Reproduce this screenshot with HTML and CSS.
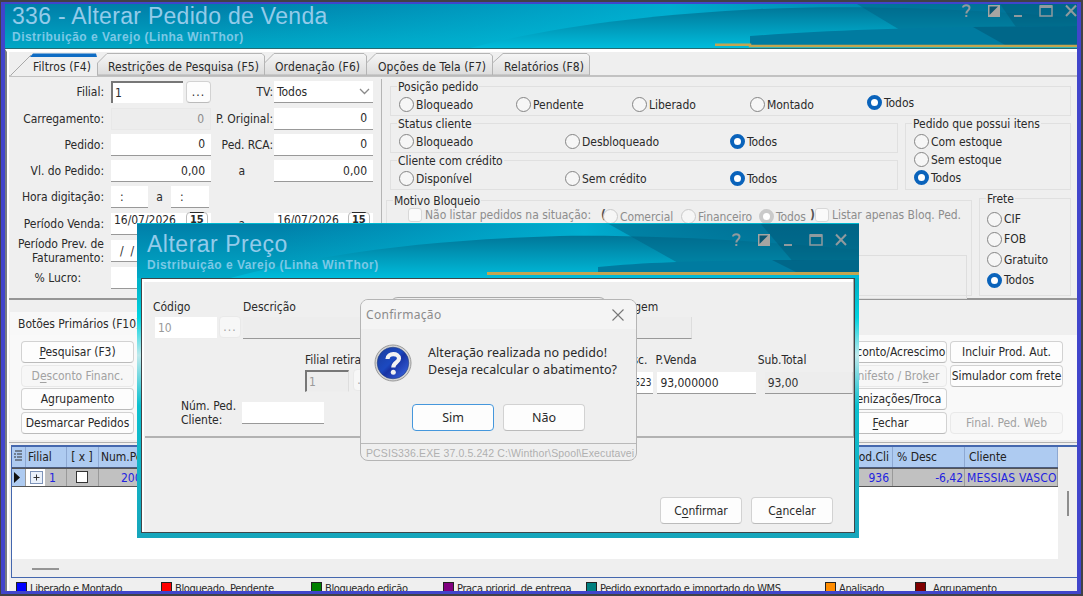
FILE: index.html
```html
<!DOCTYPE html>
<html lang="pt-BR">

<head>
    <title>336 - Alterar Pedido de Venda</title>
    <meta charset="UTF-8">
    <meta name="viewport" content="width=device-width, initial-scale=1">
    <link rel="stylesheet" href="styles.css">
</head>

<body>
    <svg width="0" height="0" class="defs">
        <defs>
            <linearGradient id="sea" x1="0" y1="0" x2="0" y2="1">
                <stop offset="0" stop-color="#007ea8"/>
                <stop offset="1" stop-color="#00a8c6"/>
            </linearGradient>
            <linearGradient id="glow" x1="0" y1="0" x2="1" y2="0">
                <stop offset="0.2" stop-color="#00c8e6" stop-opacity="0"/>
                <stop offset="0.62" stop-color="#00c8e6" stop-opacity=".6"/>
                <stop offset="0.85" stop-color="#00b0d0" stop-opacity="0.1"/>
            </linearGradient>
            <linearGradient id="wave" x1="0" y1="0" x2="0" y2="1">
                <stop offset="0" stop-color="#007799"/>
                <stop offset="1" stop-color="#00bcdb"/>
            </linearGradient>
            <linearGradient id="tabfill" x1="0" y1="0" x2="0" y2="1">
                <stop offset="0" stop-color="#f6f6f6"/>
                <stop offset="1" stop-color="#dcdcdc"/>
            </linearGradient>
            <symbol id="winbuttons" viewBox="0 0 116 16">
                <g fill="none" stroke="#909a9e" stroke-width="2">
                    <path d="M2 4.500C2 1.500 8.500 1.500 8.500 4.800C8.500 7.500 5.300 7.500 5.300 10.500M5.300 12V14"/>
                    <path d="M53 13H61"/>
                    <path d="M79 3H91V13H79Z" stroke-width="1.500"/>
                    <path d="M79 3.500H91" stroke-width="3"/>
                    <path d="M105 2.500L115 13M115 2.500L105 13"/>
                </g>
                <path d="M27 2H39V14H27Z" fill="#a5a5a2"/>
                <path d="M28.500 3.500H37L28.500 12Z" fill="#0b5571"/>
            </symbol>
        </defs>
    </svg>

    <div class="window">
        <header class="title-bar">
            <svg class="title-art" width="1072" height="45" viewBox="5 4 1072 45">
                <path d="M5 4H1077V49H5Z" fill="url(#sea)"/>
                <path d="M5 4H1077V49H5Z" fill="url(#glow)"/>
                <path d="M470 48C560 25 650 15 760 9C850 5 960 8 1077 18V48Z" fill="url(#wave)"/>
                <path d="M857 4H1077V30H900Z" fill="#006284" opacity=".5"/>
                <path d="M1000 4H1077V30H1018Z" fill="#004a68" opacity=".3"/>
                <path d="M750 36C830 30 920 27 1077 26V45H750Z" fill="#007ba0"/>
                <path d="M973 27L1077 26V45H1005Z" fill="#005a7a" opacity=".6"/>
                <path d="M715 44.800H750V46H1077" fill="none" stroke="#c3a550" stroke-width="2.500"/>
                <path d="M5 48.500H1077" stroke="#276a72"/>
            </svg>
            <div class="title-text">
                <h1>336 - Alterar Pedido de Venda</h1>
                <p>Distribuição e Varejo (Linha WinThor)</p>
            </div>
            <svg class="win-icons" width="116" height="16"><use href="#winbuttons"/></svg>
        </header>

        <main class="page">
            <nav class="tabs">
                <svg class="tab-shapes" width="600" height="24" viewBox="9 52 600 24">
                    <g fill="url(#tabfill)" stroke="#b4b4b4">
                        <path d="M97.500 75V63L107 53.500H262L264.500 56V75Z"/>
                        <path d="M264.500 75V63L274 53.500H364L366.500 56V75Z"/>
                        <path d="M366.500 75V63L376 53.500H490L492.500 56V75Z"/>
                        <path d="M492.500 75V63L503 53.500H587L589.500 56V75Z"/>
                    </g>
                    <path d="M11 76L31 55H97V76Z" fill="#efefef"/>
                    <path d="M11 75L31 55" stroke="#a8a8a8"/>
                    <path d="M30 57L33 53.500H96L97 57Z" fill="#0f6cc4"/>
                </svg>
                <div class="tab-labels">
                    <span class="tab active">Filtros (F4)</span>
                    <span class="tab wide">Restrições de Pesquisa (F5)</span>
                    <span class="tab">Ordenação (F6)</span>
                    <span class="tab options">Opções de Tela (F7)</span>
                    <span class="tab">Relatórios (F8)</span>
                </div>
            </nav>

            <div class="filters">
                <section class="fields">
                    <label>Filial:</label>
                    <div class="pair"><span class="input sunken">1</span><button class="dots">...</button></div>
                    <label>TV:</label>
                    <span class="input select">Todos <svg width="11" height="7"><path d="M1 1L5.500 5.500L10 1" fill="none" stroke="#8a8a8a" stroke-width="1.300"/></svg></span>

                    <label>Carregamento:</label>
                    <span class="input num off">0</span>
                    <label>P. Original:</label>
                    <span class="input num">0</span>

                    <label>Pedido:</label>
                    <span class="input num">0</span>
                    <label>Ped. RCA:</label>
                    <span class="input num">0</span>

                    <label>Vl. do Pedido:</label>
                    <span class="input num">0,00</span>
                    <label class="mid">a</label>
                    <span class="input num">0,00</span>

                    <label>Hora digitação:</label>
                    <div class="hours"><span class="input">:</span><span>a</span><span class="input">:</span></div>
                    <span></span>
                    <span></span>

                    <label>Período Venda:</label>
                    <span class="input date">16/07/2026 <b class="cal">15</b></span>
                    <label class="mid">a</label>
                    <span class="input date">16/07/2026 <b class="cal">15</b></span>

                    <label class="two-lines">Período Prev. de<br>Faturamento:</label>
                    <span class="input slashes">/ &nbsp;/</span>
                    <span></span>
                    <span></span>

                    <label class="profit">% Lucro:</label>
                    <span class="input"></span>
                </section>

                <section class="groups">
                    <div class="group position">
                        <span class="legend">Posição pedido</span>
                        <div class="radios five">
                            <span class="radio">Bloqueado</span>
                            <span class="radio">Pendente</span>
                            <span class="radio">Liberado</span>
                            <span class="radio">Montado</span>
                            <span class="radio on raised">Todos</span>
                        </div>
                    </div>
                    <div class="group status">
                        <span class="legend">Status cliente</span>
                        <div class="radios three">
                            <span class="radio">Bloqueado</span>
                            <span class="radio">Desbloqueado</span>
                            <span class="radio on">Todos</span>
                        </div>
                    </div>
                    <div class="group credit">
                        <span class="legend">Cliente com crédito</span>
                        <div class="radios three">
                            <span class="radio">Disponível</span>
                            <span class="radio">Sem crédito</span>
                            <span class="radio on">Todos</span>
                        </div>
                    </div>
                    <div class="group stock">
                        <span class="legend">Pedido que possui itens</span>
                        <div class="stack">
                            <span class="radio">Com estoque</span>
                            <span class="radio">Sem estoque</span>
                            <span class="radio on">Todos</span>
                        </div>
                    </div>
                    <div class="group reason">
                        <span class="legend">Motivo Bloqueio</span>
                        <div class="reason-row">
                            <span class="check not-list">Não listar pedidos na situação:</span>
                            <b>(</b>
                            <span class="radio dim">Comercial</span>
                            <span class="radio dim">Financeiro</span>
                            <span class="radio dim on">Todos</span>
                            <b class="close">)</b>
                            <span class="check only">Listar apenas Bloq. Ped.</span>
                        </div>
                        <div class="inner-box"></div>
                    </div>
                    <div class="group freight">
                        <span class="legend">Frete</span>
                        <div class="stack">
                            <span class="radio">CIF</span>
                            <span class="radio">FOB</span>
                            <span class="radio">Gratuito</span>
                            <span class="radio on">Todos</span>
                        </div>
                    </div>
                </section>
            </div>

            <div class="actions">
                <div class="actions-tab">Botões Primários (F10)</div>
                <div class="actions-body">
                    <div class="button-col">
                        <button><u>P</u>esquisar (F3)</button>
                        <button class="off">D<u>e</u>sconto Financ.</button>
                        <button>Agrupamento</button>
                        <button>Desmarcar Pedidos</button>
                    </div>
                    <div class="button-col push">
                        <button>Desconto/Acrescimo</button>
                        <button class="off">Manifesto / Bro<u>k</u>er</button>
                        <button>Indenizações/Troca</button>
                        <button><u>F</u>echar</button>
                    </div>
                    <div class="button-col last">
                        <button>Incluir Prod. Aut.</button>
                        <button>Simulador com frete</button>
                        <button class="off final">Final. Ped. Web</button>
                    </div>
                </div>
            </div>

            <div class="grid-box">
                <div class="grid-main">
                    <div class="grid-row head">
                        <span class="mark"><svg width="9" height="11"><path d="M1 1H8M3 4H8M3 7H8M1 10H8M0 4H2M0 7H2" stroke="#333"/></svg></span>
                        <span>Filial</span>
                        <span class="center">[ x ]</span>
                        <span>Num.Ped</span>
                        <span class="right">Cod.Cli</span>
                        <span>% Desc</span>
                        <span>Cliente</span>
                    </div>
                    <div class="grid-row line">
                        <span class="mark arrow"><svg width="7" height="11"><path d="M0 0L6 5.500L0 11Z" fill="#111"/></svg></span>
                        <span class="first"><i class="plus"><svg width="11" height="11"><path d="M2.500 5.500H8.500M5.500 2.500V8.500" stroke="#333"/></svg></i>1</span>
                        <span class="center"><i class="tick"></i></span>
                        <span class="order">2001</span>
                        <span class="right">936</span>
                        <span class="right desc-value">-6,42</span>
                        <span class="client">MESSIAS VASCO</span>
                    </div>
                </div>
                <div class="v-scroll"><i></i></div>
                <div class="h-scroll"><i></i></div>
            </div>

            <footer class="legend-bar">
                <span><i class="blue"></i>Liberado e Montado</span>
                <span><i class="red"></i>Bloqueado, Pendente</span>
                <span><i class="green"></i>Bloqueado edição</span>
                <span><i class="purple"></i>Praça priorid. de entrega</span>
                <span><i class="teal"></i>Pedido exportado e importado do WMS</span>
                <span><i class="orange"></i>Analisado</span>
                <span class="grouped"><i class="maroon"></i>Agrupamento</span>
            </footer>
        </main>
    </div>

    <div class="price-window">
        <header class="title-bar">
            <svg class="title-art" width="722" height="55" viewBox="137 223 722 55">
                <path d="M137 223H859V278H137Z" fill="url(#sea)"/>
                <path d="M137 223H859V278H137Z" fill="url(#glow)"/>
                <path d="M230 278C330 252 430 240 560 236C650 235 750 240 859 250V278Z" fill="url(#wave)"/>
                <path d="M607 223H859V264H680Z" fill="#006284" opacity=".5"/>
                <path d="M760 223H859V264H795Z" fill="#004a68" opacity=".35"/>
                <path d="M598 267C660 261 740 260 859 260V272H598Z" fill="#007ba0"/>
                <path d="M772 260H859V272H796Z" fill="#005a7a" opacity=".6"/>
                <path d="M487 273.500H859" stroke="#c3a550" stroke-width="3"/>
                <path d="M137 223.500H859" stroke="#00b8cf"/>
            </svg>
            <div class="title-text">
                <h1>Alterar Preço</h1>
                <p>Distribuição e Varejo (Linha WinThor)</p>
            </div>
            <svg class="win-icons" width="116" height="16"><use href="#winbuttons"/></svg>
        </header>
        <div class="price-body">
            <div class="price-form">
                <div class="row-a">
                    <div class="cell code"><label>Código</label><span class="input dim">10</span></div>
                    <button class="dots off">...</button>
                    <div class="cell desc"><label>Descrição</label><span class="input off"></span></div>
                    <div class="cell pack"><label>Embalagem</label><span class="input off"></span></div>
                </div>
                <div class="row-b">
                    <div class="cell branch"><label>Filial retira</label><span class="input sunken off">1</span></div>
                    <button class="dots off">...</button>
                    <div class="cell disc"><label>% Desc.</label><span class="input num">623</span></div>
                    <div class="cell sale"><label>P.Venda</label><span class="input">93,000000</span></div>
                    <div class="cell total"><label>Sub.Total</label><span class="input off">93,00</span></div>
                </div>
                <div class="row-c">
                    <label>Núm. Ped.<br>Cliente:</label>
                    <span class="input"></span>
                </div>
            </div>
            <div class="price-buttons">
                <button>C<u>o</u>nfirmar</button>
                <button>C<u>a</u>ncelar</button>
            </div>
        </div>
    </div>

    <div class="behind"></div>
    <div class="confirm">
        <div class="confirm-title">
            <span>Confirmação</span>
            <svg width="12" height="12"><path d="M.5 .5L11.500 11.500M11.500 .5L.5 11.500" stroke="#777" stroke-width="1.100"/></svg>
        </div>
        <div class="confirm-msg">
            <svg width="38" height="38" viewBox="0 0 38 38">
                <defs>
                    <linearGradient id="ball" x1="0" y1="0" x2="1" y2="1">
                        <stop offset="0" stop-color="#1a3c9c"/>
                        <stop offset=".45" stop-color="#1c49c0"/>
                        <stop offset=".55" stop-color="#1733a4"/>
                        <stop offset="1" stop-color="#3f6ce8"/>
                    </linearGradient>
                </defs>
                <circle cx="19" cy="19" r="18" fill="#d4d4d4" stroke="#999"/>
                <circle cx="19" cy="19" r="15.800" fill="url(#ball)" stroke="#27417e" stroke-width=".6"/>
                <path d="M13.500 15C13.500 8.500 25 8.500 25 14.500C25 18.500 19.300 18.500 19.300 23.500" fill="none" stroke="#f2f2f2" stroke-width="4.200"/>
                <circle cx="19.300" cy="28.200" r="2.500" fill="#f2f2f2"/>
            </svg>
            <p>Alteração realizada no pedido!<br>Deseja recalcular o abatimento?</p>
        </div>
        <div class="confirm-buttons">
            <button class="primary">Sim</button>
            <button>Não</button>
        </div>
        <div class="confirm-status">PCSIS336.EXE 37.0.5.242 C:\Winthor\Spool\Executavei</div>
    </div>
</body>

</html>
```
FILE: styles.css
```css
*,
*::before {
    box-sizing: border-box;
}

body {
    margin: 0;
    width: 1083px;
    height: 596px;
    overflow: hidden;
    background-color: #414146;
    color: #2a2a2a;
    font: 12px/14px "DejaVu Sans Condensed", "DejaVu Sans", sans-serif;
    letter-spacing: -.03px;
    white-space: nowrap;
}

.defs {
    position: absolute;
}

h1,
p {
    margin: 0;
}

button {
    height: 22px;
    padding: 0;
    border: 1px solid #d2d2d2;
    border-bottom-color: #bbb;
    border-radius: 4px;
    background-color: #fdfdfd;
    color: inherit;
    font: inherit;
    letter-spacing: inherit;
    white-space: nowrap;
}

button.off {
    border-color: #e9e9e9;
    background-color: #f7f7f7;
    color: #a2a2a2;
}

u {
    text-underline-offset: 2px;
}

/* main window */
.window {
    display: flex;
    flex-direction: column;
    width: 1080px;
    height: 592px;
    margin: 2px 2px 2px 1px;
    border: solid #4145cb;
    border-width: 2px 4px 3px 4px;
    overflow: hidden;
}

.title-bar {
    display: grid;
    flex: none;
    height: 45px;
    color: #93cbea;
    font-family: "Liberation Sans", sans-serif;
}

.title-bar > * {
    grid-area: 1 / 1;
}

.title-text {
    padding: 0 0 0 7px;
}

.title-bar h1 {
    font-size: 23px;
    font-weight: normal;
    line-height: 24px;
    letter-spacing: .3px;
}

.title-bar p {
    margin-top: 2px;
    font-size: 12px;
    font-weight: bold;
    line-height: 14px;
    letter-spacing: .48px;
    color: #7cc8e6;
}

.win-icons {
    justify-self: end;
    margin-top: -1px;
}

.page {
    display: flex;
    flex: 1;
    flex-direction: column;
    min-height: 0;
    border-left: 2px solid #777d80;
    border-top: 3px solid #fff;
    background-color: #efefef;
    box-shadow: inset 2px 0 #fff;
    padding-left: 2px;
}

.tabs {
    display: grid;
    flex: none;
    height: 25px;
    border-bottom: 2px solid #c2c2c2;
}

.tab-shapes,
.tab-labels {
    grid-area: 1 / 1;
}

.tab-labels {
    display: grid;
    grid-template-columns: 75px 167px 103px 126px 100px;
    padding: 8px 0 0 24px;
    letter-spacing: .1px;
}

/* filter fields on the left */
.filters {
    display: flex;
    flex: none;
    height: 223px;
    border-bottom: 2px solid #969696;
}

.fields {
    display: grid;
    grid-template-columns: 96px 100px 62px 100px;
    grid-template-rows: 26.500px 26px 26.500px 26px 26px 27px 28px 26px;
    align-items: center;
    width: 373px;
    margin: 2px 0 4px;
    border-right: 1px solid #b5b5b5;
    flex: none;
}

.fields > label {
    justify-self: end;
    padding-right: 1px;
}

.fields > :nth-child(4n + 2) {
    margin-left: 6px;
    width: 100px;
}

.fields > :nth-child(4n + 3) {
    margin-right: -7px;
}

.fields > :nth-child(4n) {
    margin-left: 7px;
    width: 99px;
}

.fields > .mid {
    padding-right: 29px;
}

.fields > .two-lines {
    text-align: right;
    padding-right: 1px;
}

.fields > .profit {
    padding-right: 24px;
}

.input {
    display: flex;
    align-items: center;
    height: 22px;
    padding: 0 3px;
    border-bottom: 1px solid #999;
    background-color: #fff;
}

.input.num {
    justify-content: flex-end;
    padding-right: 6px;
}

.input.off {
    background-color: #ededed;
}

.input.off.num {
    border: 1px solid #e8e8e8;
    color: #8c8c8c;
}

.input.sunken {
    border: solid #777;
    border-width: 2px 0 0 2px;
    padding-left: 2px;
}

.input.select {
    justify-content: space-between;
}

.pair {
    display: flex;
    gap: 3px;
}

.pair .input {
    width: 72px;
}

.dots {
    width: 25px;
    letter-spacing: 1px;
}

.hours {
    display: grid;
    grid-template-columns: 37px 23px 38px;
    align-items: center;
    text-align: center;
}

.hours .input {
    padding-left: 9px;
}

.input.date {
    justify-content: space-between;
    padding-bottom: 6px;
}

.cal {
    width: 22px;
    padding: 0 3px;
    border: 1px solid #bbb;
    border-radius: 4px;
    font-size: 11px;
    text-decoration: overline;
}

.slashes {
    padding-left: 9px;
}

/* group boxes */
.groups {
    display: grid;
    flex: none;
    width: 688px;
    grid-template-columns: 508px 7px 67px 7px 92px;
    grid-template-rows: 30px 7px 30px 7px 30px 8px 98px;
    padding: 9px 0 0 8px;
}

.group {
    border: 1px solid #e0e0e0;
}

.position {
    grid-area: 1 / 1 / 2 / 6;
}

.status {
    grid-area: 3 / 1;
}

.credit {
    grid-area: 5 / 1;
}

.stock {
    grid-area: 3 / 3 / 6 / 6;
}

.reason {
    grid-area: 7 / 1 / 8 / 4;
    margin: 2px 0 0 -4px;
}

.freight {
    grid-area: 7 / 5;
}

.legend {
    display: block;
    width: fit-content;
    height: 14px;
    margin: -7px 0 0 6px;
    padding: 0 1px;
    background-color: #efefef;
}

.radios {
    display: grid;
    margin: 2px 0 0 8px;
}

.five {
    grid-template-columns: 117px 116px 118px 117px 100px;
}

.three {
    grid-template-columns: 166px 165px 100px;
}

.radio {
    display: flex;
    align-items: center;
    gap: 2px;
    height: 17px;
}

.radio::before {
    content: "";
    width: 15px;
    height: 15px;
    flex: none;
    border: 1px solid #858585;
    border-radius: 50%;
    background-color: #f6f6f6;
}

.radio.on::before {
    border: 4.500px solid #0a63bb;
    background-color: #fff;
}

.radio.raised {
    margin-top: -2px;
    margin-bottom: 2px;
}

.radio.dim {
    color: #8d8d8d;
}

.radio.dim::before {
    border-color: #cacaca;
}

.stack {
    display: grid;
    grid-auto-rows: 18px;
    margin: 2px 0 0 8px;
}

.freight .stack {
    grid-auto-rows: 20.300px;
    margin-top: 3px;
    margin-left: 7px;
    align-items: center;
}

.reason-row {
    display: flex;
    align-items: center;
    height: 18px;
    margin-left: 21px;
    margin-top: -2px;
    color: #8d8d8d;
}

.reason-row b {
    width: 5px;
    margin-right: -3px;
    color: #555;
}

.reason-row .close {
    width: 4px;
    margin-right: 1px;
}

.check {
    display: flex;
    flex: none;
    align-items: center;
    gap: 3px;
}

.check::before {
    content: "";
    width: 14px;
    height: 14px;
    border: 1px solid #d8d8d8;
    border-radius: 3px;
    background-color: #fafafa;
}

.not-list {
    width: 193px;
}

.reason-row .radio {
    flex: none;
    width: 78px;
    padding-top: 3px;
    letter-spacing: -.1px;
}

.reason-row .radio.on {
    width: 51px;
}

.inner-box {
    height: 44px;
    margin: 31px 4px 0 7px;
    border: 1px solid #dedede;
}

/* action buttons */
.actions {
    flex: none;
    height: 143px;
    border-bottom: 1px solid #b0b0b0;
}

.actions-tab {
    width: 200px;
    height: 23px;
    margin: 12px 0 0 1px;
    padding: 5px 0 0 8px;
    background-color: #f8f8f8;
}

.actions-body {
    display: flex;
    height: 105px;
    margin-left: 1px;
    padding: 6px 14px 0 11px;
    background-color: #f9f9f9;
}

.button-col {
    display: grid;
    grid-template-rows: repeat(4, 23.700px);
    width: 113px;
}

.push {
    margin-left: auto;
    margin-right: 3px;
}

.final {
    grid-row: 4;
}

/* order grid */
.grid-box {
    display: grid;
    flex: none;
    grid-template-columns: 1fr 19px;
    grid-template-rows: 112px 18px;
    height: 133px;
    margin: 2px 0 0 2px;
    border: solid #4467ae;
    border-width: 2px 0 1px 1px;
}

.grid-main {
    background-color: #fff;
}

.grid-row {
    display: grid;
    grid-template-columns: 14px 41px 32px 600px 1fr 72px 93px;
    height: 19px;
    color: #2323e0;
    line-height: 18px;
}

.grid-row > span {
    padding: 0 3px 0 2px;
    border-right: 1px solid #9a9a9a;
    overflow: hidden;
}

.grid-row.head {
    height: 21px;
    border-bottom: 1px solid #4b5c80;
    background-color: #aecbf1;
    color: #222;
    line-height: 21px;
}

.grid-row.head > span {
    border-color: #8da8d2;
}

.grid-row.head > :nth-child(n + 6) {
    padding-left: 4px;
}

.line {
    border: solid #555;
    border-width: 1px 0;
    background-color: #c1c1c1;
}

.grid-row .right {
    text-align: right;
}

.grid-row .desc-value {
    padding-right: 1px;
}

.grid-row .center {
    text-align: center;
}

.grid-row .client {
    padding-right: 0;
    letter-spacing: .15px;
}

.grid-row .order {
    padding-left: 22px;
}

.arrow {
    background-color: #aecbf1;
}

.arrow svg {
    margin-top: 3px;
}

.grid-row .first {
    display: flex;
    align-items: center;
    gap: 6px;
    background: linear-gradient(90deg, #fff 19px, transparent 19px);
    padding-left: 4px;
}

.plus {
    display: flex;
    width: 13px;
    height: 13px;
    border: 1px solid #7d93b8;
    background-color: #eaf1fb;
}

.tick {
    display: inline-block;
    width: 12px;
    height: 12px;
    margin-top: 2px;
    border: 1.500px solid #333;
    background-color: #fff;
}

.v-scroll i {
    display: block;
    width: 2px;
    height: 25px;
    margin: 44px 0 0 9px;
    background-color: #8d8d8d;
}

.h-scroll i {
    display: block;
    width: 27px;
    height: 2px;
    margin: 9px 0 0 20px;
    background-color: #959595;
}

.legend-bar {
    display: grid;
    flex: none;
    grid-template-columns: 145px 150px 132px 143px 239px 90px 150px;
    padding: 4px 0 0 7px;
    font-size: 11px;
    letter-spacing: -.36px;
}

.legend-bar span {
    display: flex;
    gap: 3px;
}

.legend-bar .grouped {
    gap: 7px;
}

.legend-bar i {
    width: 11px;
    height: 11px;
    border: 1px solid #222;
}

.blue {
    background-color: #00f;
}

.red {
    background-color: #f00;
}

.green {
    background-color: #008000;
}

.purple {
    background-color: #800080;
}

.teal {
    background-color: #008080;
}

.orange {
    background-color: #ff8c00;
}

.maroon {
    background-color: #800000;
}

/* price window, floats over the main one */
.price-window {
    position: absolute;
    left: 137px;
    top: 223px;
    width: 722px;
    height: 315px;
    background: linear-gradient(#00b4c9 20%, #00d3df 30%, #bfe9ec 42%, #0cc0cf 58%, #16a5bb);
}

.price-window .title-bar {
    height: 55px;
}

.price-window .title-text {
    padding: 9px 0 0 10px;
}

.price-window h1 {
    letter-spacing: .5px;
}

.price-window .win-icons {
    margin: 9px 12px 0 0;
}

.price-body {
    width: 714px;
    height: 255px;
    margin-left: 4px;
    border: 1px solid #404649;
    background-color: #efefef;
    box-shadow: inset 2px 3px #fff;
}

.price-form {
    height: 159px;
    margin-left: 3px;
    border-bottom: 2px solid #b2b2b2;
    border-right: 1px solid #aaa;
    padding: 21px 0 0 8px;
}

.cell label {
    display: block;
    height: 17px;
}

.row-a,
.row-b {
    display: flex;
    align-items: flex-end;
    height: 39px;
}

.price-form .input.off {
    border-bottom: 1px solid #999;
    border-right: 1px solid #ddd;
    color: #9a9a9a;
}

.price-form .input.dim {
    border-color: #eee;
    color: #9a9a9a;
}

.code {
    width: 64px;
}

.code .input {
    margin-left: 2px;
}

.row-a .dots {
    margin: 0 2px 1px;
    width: 22px;
}

.desc {
    width: 290px;
}

.pack {
    width: 119px;
    margin-left: 40px;
}

.pack label {
    padding-left: 21px;
}

.row-b {
    height: 55px;
    padding-left: 152px;
}

.branch .input.off {
    width: 44px;
    border-top: 2px solid #777;
    border-bottom-color: #eee;
}

.branch {
    width: 46px;
    padding-bottom: 2px;
}

.row-b .dots {
    width: 22px;
    margin: 0 0 3px 2px;
}

.disc {
    width: 60px;
    margin-left: 219px;
}

.disc label,
.sale label,
.total label {
    height: 19px;
}

.disc label {
    text-align: right;
    padding-right: 6px;
}

.disc .input.num {
    padding-right: 2px;
    font-size: 10px;
}

.sale {
    width: 99px;
    margin-left: 4px;
}

.sale label {
    margin-left: -2px;
}

.total {
    width: 89px;
    margin-left: 9px;
}

.total label {
    margin-left: -7px;
}

.price-form .total .input.off {
    color: #333;
}

.row-c {
    display: flex;
    gap: 4px;
    padding: 5px 0 0 28px;
}

.row-c label {
    width: 57px;
}

.row-c .input {
    width: 82px;
    margin-top: 3px;
}

.price-buttons {
    display: flex;
    justify-content: flex-end;
    gap: 9px;
    padding: 59px 21px 0 0;
}

.price-buttons button {
    width: 82px;
    height: 27px;
}

/* confirmation box */
.behind {
    position: absolute;
    left: 390px;
    top: 297px;
    width: 217px;
    height: 20px;
    border-top: 1px solid #aaa;
    border-radius: 8px;
}

.confirm {
    position: absolute;
    left: 360px;
    top: 299px;
    width: 277px;
    height: 162px;
    border: 1px solid #b5b5b5;
    border-radius: 8px;
    background-color: #efefef;
    font-family: "Noto Sans", sans-serif;
    overflow: hidden;
}

.confirm-title {
    display: flex;
    align-items: center;
    justify-content: space-between;
    height: 29px;
    padding: 0 12px 0 5px;
    background-color: #f4f4f4;
    color: #8b8b8b;
    letter-spacing: .3px;
}

.confirm-msg {
    display: flex;
    gap: 16px;
    height: 75px;
    padding: 15px 0 0 13px;
    font-size: 12.500px;
    line-height: 17px;
    letter-spacing: .05px;
}

.confirm-buttons {
    display: flex;
    gap: 9px;
    height: 39px;
    padding-left: 51px;
    font-size: 12.500px;
}

.confirm-buttons button {
    width: 82px;
    height: 27px;
}

.confirm-buttons .primary {
    border: 1.500px solid #4597dc;
}

.confirm-status {
    padding: 2px 5px;
    border-top: 1px solid #b9b9b9;
    color: #b0b0b0;
    font: 10.500px/14px "Liberation Sans", sans-serif;
    letter-spacing: .12px;
}
```
